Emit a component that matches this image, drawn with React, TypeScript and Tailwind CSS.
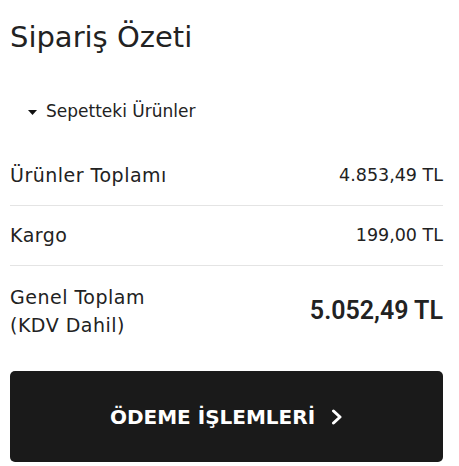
const font = { fontFamily: "'DejaVu Sans', sans-serif" };

function Row({ label, value }: { label: string; value: string }) {
  return (
    <div className="flex items-center justify-between h-[60px] border-b border-[#e4e4e4] text-[#222]">
      <span className="text-[19px] tracking-[0.5px]">{label}</span>
      <span className="text-[17.5px]">{value}</span>
    </div>
  );
}

export default function App() {
  return (
    <div className="w-[459px] h-[466px] bg-white pl-[10px] pr-[16px]" style={font}>
      <h1 className="pt-[20px] text-[29px] leading-[34px] text-[#222]">Sipariş Özeti</h1>

      <div className="mt-[40px] h-[36px] flex items-center gap-[9px] pl-[18px] text-[17px] text-[#222]">
        <svg width="9" height="5" viewBox="0 0 9 5">
          <path d="M0 0 L9 0 L4.5 5 Z" fill="#111" />
        </svg>
        <span>Sepetteki Ürünler</span>
      </div>

      <div className="mt-[16px]">
        <Row label="Ürünler Toplamı" value="4.853,49 TL" />
        <Row label="Kargo" value="199,00 TL" />
        <div className="flex items-center justify-between pt-[17px] text-[#222]">
          <div className="text-[19px] leading-[28px] tracking-[0.5px]">
            <div>Genel Toplam</div>
            <div>(KDV Dahil)</div>
          </div>
          <span
            className="text-[25px] font-semibold"
            style={{ fontFamily: "Roboto, sans-serif" }}
          >
            5.052,49 TL
          </span>
        </div>
      </div>

      <button className="mt-[32px] w-full h-[91px] rounded-[5px] bg-[#1a1a1a] text-white flex items-center justify-center gap-[16px]">
        <span className="text-[20px] font-bold">ÖDEME İŞLEMLERİ</span>
        <svg width="12" height="16" viewBox="0 0 12 16" fill="none">
          <path d="M2.5 2 L9 8 L2.5 14" stroke="white" strokeWidth="3" strokeLinecap="round" strokeLinejoin="round" />
        </svg>
      </button>
    </div>
  );
}
